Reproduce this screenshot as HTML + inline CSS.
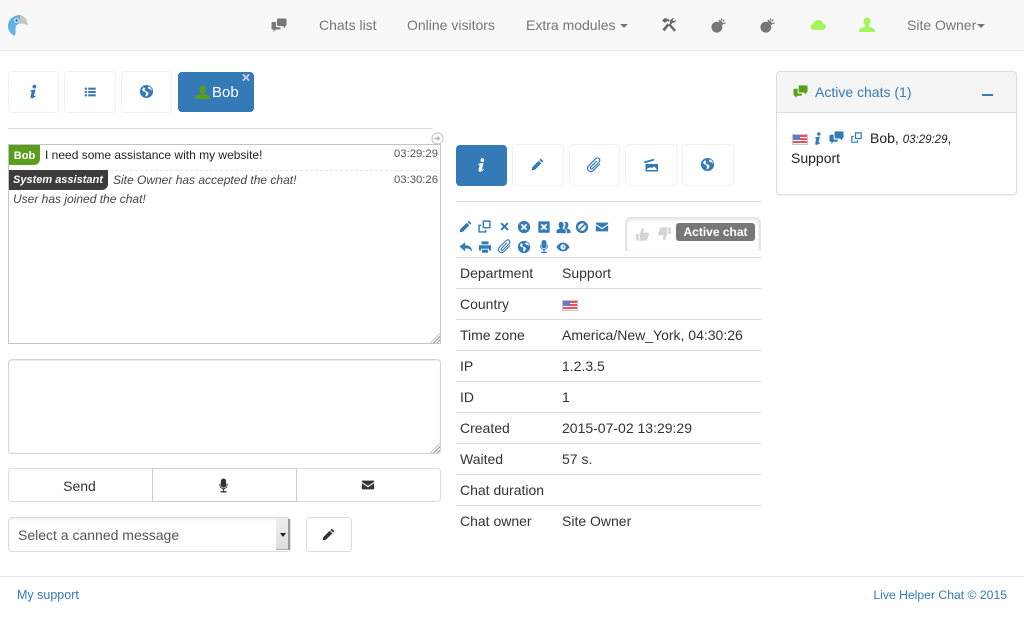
<!DOCTYPE html>
<html lang="en"><head><meta charset="utf-8"><title>Live Helper Chat</title>
<style>
*{box-sizing:border-box}
html,body{margin:0;padding:0;width:1024px;height:640px;overflow:hidden;background:#fff}
body{font-family:"Liberation Sans",sans-serif;font-size:14px;color:#333;position:relative}
.a{position:absolute;white-space:nowrap}
.nav{left:0;top:0;width:1024px;height:51px;background:#f8f8f8;border-bottom:1px solid #e7e7e7}
.nl{color:#777;line-height:20px;top:15px}
.caret{display:inline-block;width:0;height:0;border-top:4px solid #777;border-left:4px solid transparent;border-right:4px solid transparent;vertical-align:middle}
.tab{border:1px solid #f1f1f1;border-radius:4px;background:#fff}
.tab.on{background:#337ab7;border-color:#337ab7}
svg.i{position:absolute;fill:#337ab7}
svg.g{fill:#777}
svg.k{fill:#333}
svg.n{fill:#5a9e1c}
svg.l{fill:#a3f75a}
.hr{height:1px;background:#ddd}
.btn{border:1px solid #ddd;background:#fff;text-align:center}
.row{left:456px;width:305px;height:31px;border-top:1px solid #ddd;line-height:30px;padding-left:4px}
.row span{position:absolute;left:106px}
.ts{color:#555;font-size:11.3px;line-height:14px}
.flag{position:absolute;width:16px;height:11px;background:repeating-linear-gradient(#f04f55 0,#f04f55 2px,#fff 2px,#fff 3px);border:1px solid #d0c0c8}
.flag:before{content:"";position:absolute;left:0;top:0;width:7px;height:5px;background:#5a7fc8}
.grip{position:absolute;width:10px;height:10px;background:repeating-linear-gradient(135deg,transparent 0,transparent 1.5px,#999 1.5px,#999 2.5px);clip-path:polygon(100% 0,100% 100%,0 100%)}
</style></head><body>
<svg width="0" height="0" style="position:absolute">
<defs>
<symbol id="info" viewBox="0 0 16 16"><path d="M9 0.8a2 2 0 1 1-.1 4 2 2 0 0 1 .1-4zM5 6.500l5.200-.6-1.700 6.600c-.1.6.5.6 1.600-.3l.5.6C9.300 14.200 7.800 15.200 6.300 15.200c-1.400 0-1.700-.9-1.400-2.100L6 8.300 4.800 8z"/></symbol>
<symbol id="list" viewBox="0 0 16 16"><path d="M2 3h2.500v2.400H2zM6 3h8.500v2.400H6zM2 6.800h2.500v2.400H2zM6 6.800h8.500v2.400H6zM2 10.600h2.500V13H2zM6 10.600h8.500V13H6z"/></symbol>
<symbol id="globe" viewBox="0 0 16 16"><path fill-rule="evenodd" d="M8 1a7 7 0 1 1 0 14A7 7 0 0 1 8 1zM5 3.500 3.200 6l1.300 1.800 2 .4 1 2-.6 2.500 1.400.6 1.800-2.800-.2-1.800-2.400-1-1.200-.9-.8-.8 1.500-.8zM10 2.700 9.300 4.300l1.700 1.200 1.800.4.600 1.600.3-1.700-1.500-2.400z"/></symbol>
<symbol id="user" viewBox="0 0 16 16"><path d="M8 0.500c2.100 0 3.400 1.600 3.400 3.800 0 1.700-.7 3.100-1.600 3.900v1.500c1.800.7 6 1.300 6 3.600v1.700H.2v-1.700c0-2.300 4.200-2.900 6-3.600V8.200C5.300 7.400 4.600 6 4.600 4.300 4.600 2.100 5.900.5 8 .5z"/></symbol>
<symbol id="chats" viewBox="0 0 16 16"><path d="M7 1.500h7.500a1 1 0 0 1 1 1v5.500a1 1 0 0 1-1 1H14v2.300L11.700 9H7a1 1 0 0 1-1-1V2.500a1 1 0 0 1 1-1zM1.500 5H5v4a1.200 1.200 0 0 0 1.200 1.200H9.500v1.300a1 1 0 0 1-1 1H4.800L2.500 15v-2.500h-1a1 1 0 0 1-1-1V6a1 1 0 0 1 1-1z"/></symbol>
<symbol id="pencil" viewBox="0 0 16 16"><path d="M12 .8l3.200 3.200-1.600 1.700-3.200-3.200zM9.500 3.400l3.200 3.200-7.800 7.800L.8 15.200l.8-4z"/></symbol>
<symbol id="clip" viewBox="0 0 16 16"><path fill="none" stroke="currentColor" stroke-width="1.200" d="M14 6.800 7.200 13.600a3.300 3.300 0 0 1-4.700-4.700L9.800 1.600a2.300 2.300 0 0 1 3.300 3.300L6.300 11.700a1.100 1.100 0 0 1-1.600-1.600L10.700 4"/></symbol>
<symbol id="movie" viewBox="0 0 16 16"><path d="M1 4.500 10.800 1.800l.5 1.700L1.500 6.200zM2.500 7h12.500v7.500H2.500zM4 11.800v1.200h9.500v-1.200l-2.500-2.300-2 1.700-1.500-1z"/></symbol>
<symbol id="tools" viewBox="0 0 16 16"><path d="M1 3.500 4 1l5 2-1.200 1.800L6 4 4 6zM6.500 6.300l1.800 1.800-4.800 6.200-2.100-1.800zM13.500 1l-2 2 1.200 1.300 2-1.700c.5 2-1.300 3.800-3.200 3.200l-1.500 1.700L15 13l-1.700 1.700-5.800-6.500 1.500-2.200C8.700 3 11 .6 13.500 1z"/></symbol>
<symbol id="bomb" viewBox="0 0 16 16"><path d="M6.300 4a5.800 5.800 0 1 1-.1 11.600A5.800 5.800 0 0 1 6.300 4zM7.500 2.800 9.500 1.800l4 4-1 2zM10.500.5 11.800.2l.2 2.300-1.300.3zM13.700 1.300l1 1-1.800 1.600-.9-.9zM15.700 4.700v1.300l-2.300.3-.1-1.300z"/></symbol>
<symbol id="cloud" viewBox="0 0 16 16"><path d="M3.500 13a3 3 0 0 1-.6-5.900C3.400 4.600 5.700 3 8.400 3c2.300 0 4 1.300 4.600 3.500A3.300 3.300 0 0 1 12.800 13z"/></symbol>
<symbol id="mic" viewBox="0 0 16 16"><path d="M8 0.500a2.800 2.800 0 0 1 2.800 2.800v4.200a2.800 2.800 0 0 1-5.600 0V3.300A2.800 2.800 0 0 1 8 .5zM3.700 6h1v1.700a3.300 3.300 0 0 0 6.600 0V6h1v1.700a4.300 4.300 0 0 1-3.600 4.200V14h2.500v1.500H4.800V14h2.500v-2.100a4.300 4.300 0 0 1-3.600-4.200z"/></symbol>
<symbol id="mail" viewBox="0 0 16 16"><path d="M1 3h14v1.500L8 9 1 4.500zM1 6l7 4.500L15 6v7H1z"/></symbol>
<symbol id="popup" viewBox="0 0 16 16"><path fill-rule="evenodd" d="M6 1.500h8.500V10H6zM7.500 3v5.500H13V3zM1.500 6H4.500v1.500h-1.500V13h5.500v-1.500H10V14.500H1.500z"/></symbol>
<symbol id="x" viewBox="0 0 16 16"><path d="M4.700 3 8 6.300 11.300 3 13 4.700 9.700 8 13 11.300 11.300 13 8 9.700 4.700 13 3 11.300 6.300 8 3 4.700z"/></symbol>
<symbol id="xc" viewBox="0 0 16 16"><path fill-rule="evenodd" d="M8 1a7 7 0 1 1 0 14A7 7 0 0 1 8 1zM5.700 4.300 4.300 5.700 6.600 8l-2.300 2.300 1.400 1.400L8 9.400l2.300 2.300 1.400-1.400L9.400 8l2.300-2.300-1.400-1.400L8 6.600z"/></symbol>
<symbol id="xs" viewBox="0 0 16 16"><path fill-rule="evenodd" d="M1.500 1.500h13v13h-13zM5.700 4.300 4.300 5.700 6.600 8l-2.300 2.300 1.400 1.400L8 9.400l2.300 2.300 1.400-1.400L9.400 8l2.300-2.300-1.400-1.400L8 6.600z"/></symbol>
<symbol id="users" viewBox="0 0 16 16"><path d="M5.500 2c1.700 0 2.700 1.300 2.700 3 0 1.400-.6 2.500-1.200 3.200v1c1.500.5 3.500 1 3.500 2.800v2H.5v-2c0-1.800 2-2.300 3.500-2.800v-1C3.400 7.500 2.800 6.400 2.800 5c0-1.700 1-3 2.700-3zM10.500 2c1.700 0 2.700 1.300 2.700 3 0 1.400-.6 2.500-1.200 3.200v1c1.500.5 3.500 1 3.500 2.800v2h-4v-2c0-1.400-1-2.400-2.500-3V7.900C9.700 7 10 6 10 5c0-1.100-.3-2-.9-2.700.4-.2.900-.3 1.400-.3z"/></symbol>
<symbol id="ban" viewBox="0 0 16 16"><path fill-rule="evenodd" d="M8 1a7 7 0 1 1 0 14A7 7 0 0 1 8 1zM4.300 10.500 10.500 4.300A4.600 4.600 0 0 0 4.300 10.500zM5.500 11.700a4.600 4.600 0 0 0 6.200-6.200z"/></symbol>
<symbol id="reply" viewBox="0 0 16 16"><path d="M7 2.500V6c5 0 8 2.500 8 7.500-1.500-3-4-4-8-4v3.500L.5 7.500z"/></symbol>
<symbol id="print" viewBox="0 0 16 16"><path fill-rule="evenodd" d="M4 1.500h8V5H4zM1 6h14v6h-2.500v-2h-9v2H1zM4.500 11h7v3.500h-7z"/></symbol>
<symbol id="eye" viewBox="0 0 16 16"><path fill-rule="evenodd" d="M8 3c3.500 0 6 2.500 7.500 5C14 10.500 11.500 13 8 13S2 10.500.5 8C2 5.500 4.500 3 8 3zM8 5a3 3 0 1 0 0 6 3 3 0 0 0 0-6zM8 6.200 7.500 8.300 9.500 9l.3-.8-1.200-.5L8.800 6.200z"/></symbol>
<symbol id="up" viewBox="0 0 16 16"><path d="M1 7.500h3v7H1zM5 7.500 7.800 1c1.700 0 2 1.300 1.700 2.500L9 6h4.500c1.200 0 1.700 1 1.300 2L13 13.500c-.3.800-.8 1-1.500 1H5z"/></symbol>
<symbol id="dn" viewBox="0 0 16 16"><path d="M12 1.500h3v7h-3zM11 8.500 8.200 15c-1.700 0-2-1.300-1.700-2.500L7 10H2.500c-1.200 0-1.700-1-1.300-2L3 2.500c.3-.8.800-1 1.500-1H11z"/></symbol>
</defs></svg>

<div class="a nav"></div>
<svg class="a" style="left:8px;top:15px" width="20" height="21" viewBox="0 0 20 21"><path d="M13 0.200C5.500-.5 0 4.500 0 11c0 4.500 2.500 8 6.500 9.800 1-1 1.200-3 1-6C7.300 12 8 10 10.500 9L12 4z" fill="#5fb3e6"/><path d="M12 .2c4.500.3 7.500 4 8 10.600C18 9 15 8 10.500 9 11.500 6 12 3 12 .2z" fill="#c6c7bb"/><circle cx="8.500" cy="5.500" r="2.300" fill="#e8eef2"/><circle cx="8.500" cy="5.500" r="1.100" fill="#334"/></svg>
<svg class="i g" style="left:271px;top:17px" width="16" height="16"><use href="#chats"/></svg>
<div class="a nl" style="left:319px">Chats list</div>
<div class="a nl" style="left:407px">Online visitors</div>
<div class="a nl" style="left:526px">Extra modules <span class="caret" style="margin-left:1px"></span></div>
<svg class="i" style="left:661px;top:17px;fill:#666" width="16" height="16"><use href="#tools"/></svg>
<svg class="i g" style="left:711px;top:18px" width="15" height="15"><use href="#bomb"/></svg>
<svg class="i g" style="left:760px;top:18px" width="15" height="15"><use href="#bomb"/></svg>
<svg class="i l" style="left:810px;top:17px" width="16" height="16"><use href="#cloud"/></svg>
<svg class="i l" style="left:859px;top:17px" width="16" height="16"><use href="#user"/></svg>
<div class="a nl" style="left:907px">Site Owner<span class="caret" style="margin-left:1px"></span></div>

<div class="a tab" style="left:8px;top:71px;width:51px;height:42px"></div>
<svg class="i" style="left:26px;top:84px" width="15" height="15"><use href="#info"/></svg>
<div class="a tab" style="left:64px;top:71px;width:52px;height:42px"></div>
<svg class="i" style="left:83px;top:85px" width="14" height="14"><use href="#list"/></svg>
<div class="a tab" style="left:121px;top:71px;width:51px;height:42px"></div>
<svg class="i" style="left:139px;top:84px" width="15" height="15"><use href="#globe"/></svg>
<div class="a tab on" style="left:178px;top:72px;width:76px;height:40px"></div>
<svg class="i n" style="left:195px;top:85px" width="15" height="15"><use href="#user"/></svg>
<div class="a" style="left:212px;top:82px;color:#fff;font-size:15px;line-height:21px">Bob</div>
<svg class="i" style="left:240px;top:71px;fill:#ccd" width="12" height="13"><use href="#x"/></svg>

<div class="a hr" style="left:8px;top:128px;width:424px"></div>
<svg class="a" style="left:431px;top:132px" width="13" height="13" viewBox="0 0 13 13"><circle cx="6.500" cy="6.500" r="5.500" fill="#fff" stroke="#ccc" stroke-width="1.200"/><path d="M3.500 5.500h3V3.500l3 3-3 3v-2h-3z" fill="#bbb"/></svg>
<div class="a" style="left:8px;top:144px;width:433px;height:200px;border:1px solid #c4c4c4;background:#fff"></div>
<div class="a" style="left:9px;top:145px;width:31px;height:20px;background:#5a9e1c;border-radius:0 0 6px 0;color:#fff;font-weight:bold;font-size:11px;line-height:22px;text-align:center">Bob</div>
<div class="a" style="left:45px;top:147px;line-height:16px;font-size:12px;color:#222">I need some assistance with my website!</div>
<div class="a ts" style="left:394px;top:147px">03:29:29</div>
<div class="a" style="left:110px;top:170px;width:328px;border-top:1px dashed #e5e5e5"></div>
<div class="a" style="left:9px;top:170px;width:99px;height:20px;background:#3c3c3c;border-radius:0 0 6px 0;color:#fff;font-weight:bold;font-style:italic;font-size:11px;line-height:21px;padding-left:4px">System assistant</div>
<div class="a" style="left:113px;top:172px;line-height:16px;font-size:12px;font-style:italic;color:#444">Site Owner has accepted the chat!</div>
<div class="a ts" style="left:394px;top:173px">03:30:26</div>
<div class="a" style="left:13px;top:191px;line-height:16px;font-size:12px;font-style:italic;color:#444">User has joined the chat!</div>
<div class="grip" style="left:430px;top:333px"></div>

<div class="a" style="left:8px;top:359px;width:433px;height:95px;border:1px solid #d4d4d4;border-radius:4px;box-shadow:inset 0 1px 1px rgba(0,0,0,.08);background:#fff"></div>
<div class="grip" style="left:430px;top:443px"></div>

<div class="a btn" style="left:8px;top:468px;width:145px;height:34px;border-radius:4px 0 0 4px;line-height:34px;color:#333;padding-right:2px">Send</div>
<div class="a btn" style="left:296px;top:468px;width:145px;height:34px;border-radius:0 4px 4px 0"></div>
<div class="a btn" style="left:152px;top:468px;width:145px;height:34px;border-color:#ccc"></div>
<svg class="i k" style="left:216px;top:478px" width="15" height="15"><use href="#mic"/></svg>
<svg class="i k" style="left:361px;top:478px" width="14" height="14"><use href="#mail"/></svg>

<div class="a" style="left:8px;top:517px;width:283px;height:35px;border:1px solid #ddd;border-radius:4px;box-shadow:inset 0 1px 2px rgba(0,0,0,.1);background:#fff;color:#555;line-height:34px;padding-left:9px">Select a canned message</div>
<div class="a" style="left:276px;top:519px;width:14px;height:31px;background:linear-gradient(#eee,#ddd);border-right:2px solid #999;border-bottom:1px solid #aaa"></div>
<div class="a" style="left:280px;top:533px;width:0;height:0;border-top:4px solid #222;border-left:3px solid transparent;border-right:3px solid transparent"></div>
<div class="a btn" style="left:306px;top:517px;width:46px;height:35px;border-radius:4px"></div>
<svg class="i k" style="left:322px;top:528px" width="13" height="13"><use href="#pencil"/></svg>

<div class="a tab on" style="left:456px;top:145px;width:51px;height:41px"></div>
<svg class="i" style="left:474px;top:157px;fill:#fff" width="15" height="16"><use href="#info"/></svg>
<div class="a tab" style="left:512px;top:144px;width:52px;height:42px"></div>
<svg class="i" style="left:531px;top:158px" width="13" height="13"><use href="#pencil"/></svg>
<div class="a tab" style="left:569px;top:144px;width:51px;height:42px"></div>
<svg class="i" style="left:586px;top:157px;color:#337ab7" width="16" height="16"><use href="#clip"/></svg>
<div class="a tab" style="left:625px;top:144px;width:52px;height:42px"></div>
<svg class="i" style="left:643px;top:157px" width="16" height="16"><use href="#movie"/></svg>
<div class="a tab" style="left:682px;top:144px;width:52px;height:42px"></div>
<svg class="i" style="left:700px;top:157px" width="15" height="15"><use href="#globe"/></svg>
<div class="a hr" style="left:456px;top:201px;width:305px"></div>

<svg class="i" style="left:459px;top:220px" width="13" height="13"><use href="#pencil"/></svg>
<svg class="i" style="left:477px;top:219px" width="15" height="15"><use href="#popup"/></svg>
<svg class="i" style="left:498px;top:220px" width="13" height="13"><use href="#x"/></svg>
<svg class="i" style="left:517px;top:220px" width="14" height="14"><use href="#xc"/></svg>
<svg class="i" style="left:537px;top:220px" width="14" height="14"><use href="#xs"/></svg>
<svg class="i" style="left:556px;top:220px" width="15" height="15"><use href="#users"/></svg>
<svg class="i" style="left:575px;top:220px" width="14" height="14"><use href="#ban"/></svg>
<svg class="i" style="left:595px;top:220px" width="14" height="14"><use href="#mail"/></svg>
<svg class="i" style="left:459px;top:240px" width="14" height="14"><use href="#reply"/></svg>
<svg class="i" style="left:478px;top:240px" width="14" height="14"><use href="#print"/></svg>
<svg class="i" style="left:497px;top:239px;color:#337ab7" width="15" height="15"><use href="#clip"/></svg>
<svg class="i" style="left:517px;top:240px" width="14" height="14"><use href="#globe"/></svg>
<svg class="i" style="left:537px;top:239px" width="14" height="15"><use href="#mic"/></svg>
<svg class="i" style="left:556px;top:240px" width="14" height="14"><use href="#eye"/></svg>

<div class="a" style="left:625px;top:217px;width:136px;height:34px;border:2px solid #e6e6e6;border-bottom:0;border-radius:6px 6px 0 0;background:#fff;box-shadow:inset 0 1px 3px rgba(0,0,0,.1)"></div>
<svg class="i" style="left:635px;top:227px;fill:#d5d5d5" width="15" height="15"><use href="#up"/></svg>
<svg class="i" style="left:657px;top:226px;fill:#d5d5d5" width="15" height="15"><use href="#dn"/></svg>
<div class="a" style="left:676px;top:223px;width:79px;height:18px;background:#777;border-radius:3px;color:#fff;font-weight:bold;font-size:12px;line-height:18px;text-align:center">Active chat</div>

<div class="a row" style="top:257px">Department<span>Support</span></div>
<div class="a row" style="top:288px">Country</div>
<div class="flag" style="left:562px;top:300px"></div>
<div class="a row" style="top:319px">Time zone<span>America/New_York, 04:30:26</span></div>
<div class="a row" style="top:350px">IP<span>1.2.3.5</span></div>
<div class="a row" style="top:381px">ID<span>1</span></div>
<div class="a row" style="top:412px">Created<span>2015-07-02 13:29:29</span></div>
<div class="a row" style="top:443px">Waited<span>57 s.</span></div>
<div class="a row" style="top:474px">Chat duration</div>
<div class="a row" style="top:505px">Chat owner<span>Site Owner</span></div>

<div class="a" style="left:776px;top:71px;width:241px;height:124px;border:1px solid #ddd;border-radius:4px;background:#fff;box-shadow:0 1px 1px rgba(0,0,0,.05)"></div>
<div class="a" style="left:777px;top:72px;width:239px;height:41px;background:#f5f5f5;border-bottom:1px solid #ddd;border-radius:3px 3px 0 0"></div>
<svg class="i n" style="left:793px;top:84px" width="15" height="15"><use href="#chats"/></svg>
<div class="a" style="left:815px;top:82px;color:#337ab7;line-height:20px">Active chats (1)</div>
<div class="a" style="left:982px;top:94px;width:11px;height:2px;background:#337ab7"></div>
<div class="flag" style="left:792px;top:134px"></div>
<svg class="i" style="left:811px;top:131px" width="14" height="15"><use href="#info"/></svg>
<svg class="i" style="left:829px;top:130px" width="15" height="15"><use href="#chats"/></svg>
<svg class="i" style="left:850px;top:131px" width="13" height="13"><use href="#popup"/></svg>
<div class="a" style="left:870px;top:129px;line-height:18px;color:#222">Bob, <i style="font-size:11.500px">03:29:29</i>,</div>
<div class="a" style="left:791px;top:149px;line-height:18px;color:#222">Support</div>

<div class="a" style="left:0;top:576px;width:1024px;height:1px;background:#e7e7e7"></div>
<div class="a" style="left:17px;top:587px;font-size:12.500px;line-height:16px;color:#337ab7">My support</div>
<div class="a" style="right:17px;top:587px;font-size:12.200px;line-height:16px;color:#337ab7">Live Helper Chat © 2015</div>
</body></html>
